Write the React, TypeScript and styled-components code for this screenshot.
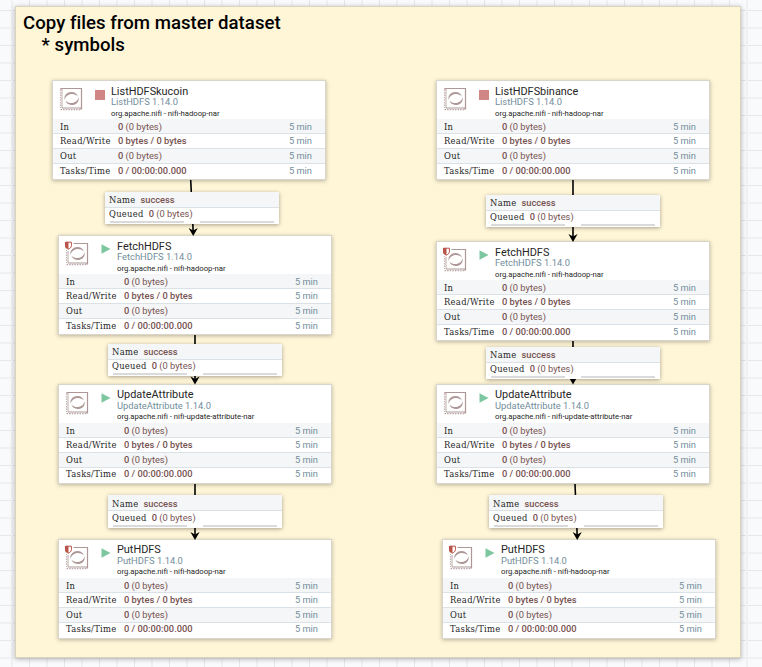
import React from "react";
import styled, { createGlobalStyle } from "styled-components";

const GlobalStyle = createGlobalStyle`
  *, *::before, *::after { box-sizing: border-box; }
  html, body { margin: 0; padding: 0; overflow: hidden; }
  body { font-family: Roboto, "Liberation Sans", sans-serif; }
`;

const Canvas = styled.main`
  position: relative;
  width: 762px;
  height: 667px;
  overflow: hidden;
  background-color: #f9fafb;
  background-image:
    linear-gradient(90deg, transparent 29px, #e4e8eb 29px, #e4e8eb 30px, transparent 30px),
    linear-gradient(90deg, transparent 11px, #eff1f3 11px, #eff1f3 13px, transparent 13px),
    linear-gradient(180deg, transparent 10px, #e4e8eb 10px, #e4e8eb 11px, transparent 11px),
    linear-gradient(180deg, transparent 27px, #eff1f3 27px, #eff1f3 29px, transparent 29px);
  background-size: 35px 35px;
`;

const Label = styled.section`
  position: absolute;
  left: 15px;
  top: 6px;
  width: 726px;
  height: 652px;
  padding: 5px 8px;
  background: #fff5d7;
  border: 1px solid #d9d3c0;
  box-shadow: 0 1px 5px rgba(0, 0, 0, 0.3);
`;

const LabelText = styled.h1`
  margin: 0;
  margin-left: -1px;
  font-size: 18.6px;
  line-height: 22px;
  font-weight: 500;
  letter-spacing: 0.03px;
  color: #000;
  white-space: pre;
`;

const Wires = styled.svg`
  position: absolute;
  inset: 0;
  pointer-events: none;
`;

const Card = styled.article<{ $x: number; $y: number }>`
  position: absolute;
  left: ${(p) => p.$x}px;
  top: ${(p) => p.$y}px;
  width: 274px;
  height: 100px;
  background: #fff;
  border: 1px solid #d8d5cb;
  box-shadow: 0 1px 4px rgba(0, 0, 0, 0.28);
`;

const CardHeader = styled.header`
  display: flex;
  height: 38px;
  padding-left: 6px;
`;

const IconSlot = styled.div`
  position: relative;
  width: 24px;
  height: 24px;
  margin-top: 6px;
  flex: none;
`;

const ShieldBadge = styled.svg`
  position: absolute;
  left: -1px;
  top: -1px;
`;

const StatusIcon = styled.svg<{ $running: boolean }>`
  flex: none;
  margin: ${(p) => (p.$running ? 8 : 9)}px 6px 0 12px;
`;

const Titles = styled.div<{ $tight: boolean }>`
  display: flex;
  flex-direction: column;
  padding-top: ${(p) => (p.$tight ? 4 : 5)}px;
  white-space: nowrap;
  & > :nth-child(2) { margin-top: ${(p) => (p.$tight ? -1 : -2)}px; }
  & > :nth-child(3) { margin-top: ${(p) => (p.$tight ? 0 : 1)}px; }
`;

const Name = styled.span`
  font-size: 10.9px;
  line-height: 12px;
  color: #262626;
`;

const Kind = styled.span`
  font-size: 9.35px;
  line-height: 11px;
  color: #728e9b;
`;

const Bundle = styled.span`
  font-size: 7.75px;
  line-height: 11px;
  color: #262626;
  letter-spacing: -0.03px;
`;

const Stats = styled.div<{ $tight: boolean }>`
  display: grid;
  grid-template-rows: ${(p) => (p.$tight ? "15px 15px 15px 13px" : "15px 15px 15px 14px")};
`;

const StatRow = styled.div<{ $shaded: boolean }>`
  display: grid;
  grid-template-columns: 58px 1fr auto;
  align-items: center;
  padding: 0 13px 0 7px;
  background: ${(p) => (p.$shaded ? "#f4f6f7" : "#fff")};
  border-bottom: 1px solid #dbe2e7;
  white-space: nowrap;
  &:first-child { padding-top: 2px; }
  &:last-child { border-bottom: 0; padding-bottom: 1px; }
`;

const SlabText = styled.span`
  font-family: "Roboto Slab", "DejaVu Serif", serif;
  font-size: 8.4px;
  line-height: 12px;
  letter-spacing: 0.3px;
  color: #262626;
`;

const Value = styled.span`
  font-size: 9.3px;
  line-height: 12px;
  color: #775351;
  font-weight: 500;
  & > em { font-style: normal; font-weight: 400; }
`;

const Window = styled.span`
  font-size: 9.3px;
  line-height: 12px;
  color: #728e9b;
`;

const QueueBox = styled.article<{ $x: number; $y: number; $low: boolean }>`
  position: absolute;
  left: ${(p) => p.$x}px;
  top: ${(p) => p.$y}px;
  width: 174px;
  height: ${(p) => (p.$low ? 33 : 32)}px;
  background: #fff;
  box-shadow: 0 1px 4px rgba(0, 0, 0, 0.35);
`;

const QueueRow = styled.div<{ $shaded?: boolean; $low: boolean }>`
  display: flex;
  align-items: center;
  gap: 5px;
  height: ${(p) => (p.$shaded ? 16 : p.$low ? 13 : 12)}px;
  padding-left: 4px;
  padding-top: ${(p) => (p.$low ? (p.$shaded ? 2 : 1) : 0)}px;
  background: ${(p) => (p.$shaded ? "#f4f6f7" : "#fff")};
  border-bottom: ${(p) => (p.$shaded ? "1px solid #dbe2e7" : "0")};
  white-space: nowrap;
`;

const Gauges = styled.div`
  display: flex;
  gap: 16px;
  padding: 1px 5px;
  & > i { width: 74px; height: 2px; background: #dadada; }
`;

function ProcessorIcon() {
  return (
    <svg width="24" height="24" viewBox="0 0 24 24" fill="none">
      <path d="M2 2.5V1.5H22.5V22H21" stroke="#ad9897" strokeWidth="1.2" />
      <path d="M1.5 2.5V21" stroke="#c5b6b5" strokeWidth="1.2" strokeDasharray="1.5 1" />
      <path d="M3 2V20.8" stroke="#ad9897" strokeWidth=".8" />
      <path d="M2.8 21H22" stroke="#ad9897" strokeWidth="1" />
      <path d="M1.5 22.6H21" stroke="#b8a6a5" strokeWidth="1.3" strokeDasharray="1.5 1.1" />
      <path d="M5.6 12.8C4.7 7.8 8.6 4.9 12.6 5C15.8 5.1 18 6.9 18.8 9.2C16.2 6.9 13.4 6.5 10.9 7.2C8.3 8 6.3 9.7 5.6 12.8Z" fill="#ad9897" />
      <path d="M19.6 10.2C20.5 15.2 16.6 18.1 12.6 18C9.4 17.9 7.2 16.1 6.4 13.8C9 16.1 11.8 16.5 14.3 15.8C16.9 15 18.9 13.3 19.6 10.2Z" fill="#ad9897" />
    </svg>
  );
}

function Shield() {
  return (
    <ShieldBadge width="10" height="10" viewBox="0 0 10 10">
      <path d="M0 0H9.6V5C9.6 8 7 9.3 4.5 10C2 9 0 8 0 5Z" fill="#fff" />
      <path d="M1.5 1.2H7.4V4.7C7.4 6.5 5.9 7.4 4.4 8C2.9 7.4 1.5 6.5 1.5 4.7Z" fill="#fff" stroke="#ba554a" strokeWidth="1" />
      <path d="M4.5 1H1.1V5C1.1 6.8 2.8 7.8 4.5 8.4Z" fill="#ba554a" />
    </ShieldBadge>
  );
}

type ProcessorData = {
  x: number;
  y: number;
  name: string;
  kind: string;
  nar?: string;
  running?: boolean;
  restricted?: boolean;
  tight?: boolean;
};

function Processor({ x, y, name, kind, nar = "nifi-hadoop-nar", running = true, restricted = false, tight = false }: ProcessorData) {
  const rows = [
    { label: "In", value: "0", extra: " (0 bytes)" },
    { label: "Read/Write", value: "0 bytes / 0 bytes", extra: "" },
    { label: "Out", value: "0", extra: " (0 bytes)" },
    { label: "Tasks/Time", value: "0 / 00:00:00.000", extra: "" },
  ];
  return (
    <Card $x={x} $y={y}>
      <CardHeader>
        <IconSlot>
          <ProcessorIcon />
          {restricted && <Shield />}
        </IconSlot>
        <StatusIcon $running={running} width="10" height="10" viewBox="0 0 10 10">
          {running ? <path d="M.5 .3L9.5 5L.5 9.7Z" fill="#7dc7a0" /> : <rect width="10" height="10" fill="#d18686" />}
        </StatusIcon>
        <Titles $tight={tight}>
          <Name>{name}</Name>
          <Kind>{kind} 1.14.0</Kind>
          <Bundle>org.apache.nifi - {nar}</Bundle>
        </Titles>
      </CardHeader>
      <Stats $tight={tight}>
        {rows.map((row, i) => (
          <StatRow key={row.label} $shaded={i % 2 === 0}>
            <SlabText>{row.label}</SlabText>
            <Value>{row.value}<em>{row.extra}</em></Value>
            <Window>5 min</Window>
          </StatRow>
        ))}
      </Stats>
    </Card>
  );
}

function Queue({ x, y, low = false }: { x: number; y: number; low?: boolean }) {
  return (
    <QueueBox $x={x} $y={y} $low={low}>
      <QueueRow $shaded $low={low}>
        <SlabText>Name</SlabText>
        <Value>success</Value>
      </QueueRow>
      <QueueRow $low={low}>
        <SlabText>Queued</SlabText>
        <Value>0<em> (0 bytes)</em></Value>
      </QueueRow>
      <Gauges><i /><i /></Gauges>
    </QueueBox>
  );
}

const processors: ProcessorData[] = [
  { x: 52, y: 80, name: "ListHDFSkucoin", kind: "ListHDFS", running: false },
  { x: 58, y: 235, name: "FetchHDFS", kind: "FetchHDFS", restricted: true },
  { x: 58, y: 384, name: "UpdateAttribute", kind: "UpdateAttribute", nar: "nifi-update-attribute-nar", tight: true },
  { x: 58, y: 539, name: "PutHDFS", kind: "PutHDFS", restricted: true, tight: true },
  { x: 436, y: 80, name: "ListHDFSbinance", kind: "ListHDFS", running: false },
  { x: 436, y: 241, name: "FetchHDFS", kind: "FetchHDFS", restricted: true },
  { x: 436, y: 384, name: "UpdateAttribute", kind: "UpdateAttribute", nar: "nifi-update-attribute-nar", tight: true },
  { x: 442, y: 539, name: "PutHDFS", kind: "PutHDFS", restricted: true, tight: true },
];

const queues = [
  { x: 105, y: 192 },
  { x: 108, y: 344 },
  { x: 108, y: 495, low: true },
  { x: 486, y: 195 },
  { x: 486, y: 347 },
  { x: 489, y: 495, low: true },
];

const wires = [
  [190.7, 180, 193.2, 236],
  [195, 335, 195, 384.5],
  [195, 484, 195, 540],
  [573, 180, 573, 242],
  [573, 341, 573, 384.5],
  [575, 484, 577.2, 540],
];

export default function App() {
  return (
    <>
      <GlobalStyle />
      <Canvas>
        <Label>
          <LabelText>{"Copy files from master dataset\n    * symbols"}</LabelText>
        </Label>
        {processors.map((p) => (
          <Processor key={`${p.x}-${p.y}`} {...p} />
        ))}
        <Wires width="762" height="667">
          {wires.map(([x1, y1, x2, y2]) => (
            <g key={`${x1}-${y1}`}>
              <line x1={x1} y1={y1} x2={x2} y2={y2 - 4} stroke="#000" strokeWidth="1.6" />
              <path d={`M${x2} ${y2}l-4.6 -8l4.6 2.4l4.6 -2.4z`} fill="#000" />
            </g>
          ))}
        </Wires>
        {queues.map((q) => (
          <Queue key={`${q.x}-${q.y}`} {...q} />
        ))}
      </Canvas>
    </>
  );
}
